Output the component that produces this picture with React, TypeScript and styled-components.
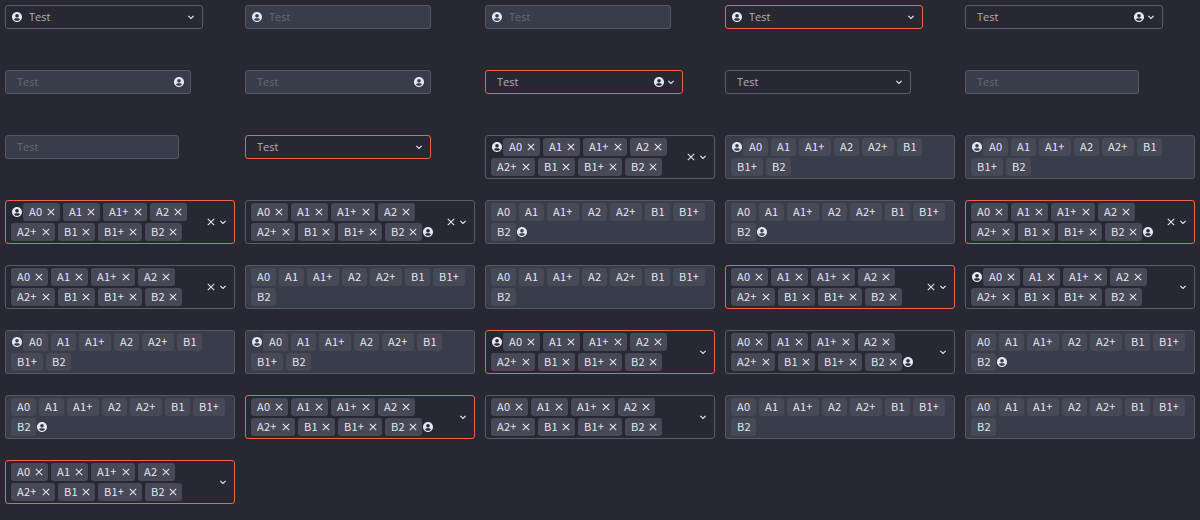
import React from "react";
import styled, { createGlobalStyle, css } from "styled-components";

const GlobalStyle = createGlobalStyle`
  * { box-sizing: border-box; }
  body {
    margin: 0;
    background: #282833;
    font-family: "Noto Sans CJK SC", sans-serif;
    font-size: 11px;
    overflow: hidden;
  }
`;

type State = "normal" | "disabled" | "error";
type Side = "left" | "right" | "none";

const Page = styled.main`
  display: grid;
  grid-template-columns: repeat(5, 240px);
  grid-auto-rows: 65px;
  height: 520px;
  width: 1200px;
`;

const Cell = styled.div`
  padding: 5px;
  display: flex;
  align-items: flex-start;
`;

const Field = styled.div<{ $state: State; $multi?: boolean }>`
  display: flex;
  align-items: center;
  border: 1px solid #5b5b69;
  border-radius: 3px;
  padding: 0 5px;
  height: 24px;
  color: #e6e6f0;
  ${(p) => p.$multi && css`width: 230px; height: 44px;`}
  ${(p) => p.$state === "disabled" && css`background: #393c4a; border-color: #555866;`}
  ${(p) => p.$state === "error" && css`border-color: #ec6547;`}
`;

const Input = styled.input`
  width: 162px;
  height: 22px;
  padding: 0 6px 1px;
  border: 0;
  outline: 0;
  background: transparent;
  font: 11px "Open Sans", sans-serif;
  &::placeholder { color: #b0b0c0; opacity: 1; }
  &:disabled::placeholder { color: #666876; }
`;

const Tags = styled.div`
  flex: 1;
  display: flex;
  flex-wrap: wrap;
  align-items: center;
  row-gap: 2px;
`;

const Tag = styled.span<{ $closable: boolean }>`
  display: flex;
  align-items: center;
  height: 18px;
  line-height: 16px;
  padding: 0 ${(p) => (p.$closable ? 3 : 6)}px 0 6px;
  margin-right: 3px;
  gap: 3px;
  border-radius: 3px;
  background: #474957;
  &:nth-last-child(1 of span) { margin-right: 0; }
`;

const Label = styled.b<{ $wide: boolean }>`
  width: ${(p) => (p.$wide ? 20 : 13)}px;
  height: 18px;
  font-weight: 400;
  letter-spacing: 0.25px;
  white-space: nowrap;
`;

const Icon = styled.svg`
  width: 12px;
  height: 12px;
  flex: none;
  fill: currentColor;
`;

const LineIcon = styled(Icon)`
  fill: none;
  stroke: currentColor;
`;

const Account = () => (
  <Icon viewBox="-49.6 -41.6 595.2 595.2">
    <path d="M248 8C111 8 0 119 0 256s111 248 248 248 248-111 248-248S385 8 248 8zm0 96c48.6 0 88 39.4 88 88s-39.4 88-88 88-88-39.4-88-88 39.4-88 88-88zm0 344c-58.7 0-111.3-26.6-146.5-68.2 18.8-35.4 55.6-59.8 98.5-59.8 2.4 0 4.8.4 7.1 1.1 13 4.2 26.6 6.9 40.9 6.9 14.3 0 28-2.7 40.9-6.9 2.3-.7 4.7-1.1 7.1-1.1 42.9 0 79.7 24.4 98.5 59.8C359.3 421.4 306.7 448 248 448z" />
  </Icon>
);

const Close = () => (
  <LineIcon viewBox="0 0 12 12" strokeWidth="1.05">
    <path d="M2.8 2.8 9.2 9.2M9.2 2.8 2.8 9.2" />
  </LineIcon>
);

const Arrow = () => (
  <LineIcon viewBox="0 0 12 12" strokeWidth="1.15">
    <path d="M3.3 4.9 6 7.4 8.7 4.9" />
  </LineIcon>
);

const LEVELS = ["A0", "A1", "A1+", "A2", "A2+", "B1", "B1+", "B2"];
const SIDES: Side[] = ["left", "right", "none"];
const STATES: State[] = ["normal", "disabled", "disabled", "error"];

const Single = ({ side, state }: { side: Side; state: State }) => (
  <Field $state={state}>
    {side === "left" && <Account />}
    <Input placeholder="Test" disabled={state === "disabled"} />
    {side === "right" && <Account />}
    {state !== "disabled" && <Arrow />}
  </Field>
);

const Multi = ({ side, state, clearable }: { side: Side; state: State; clearable: boolean }) => {
  const enabled = state !== "disabled";
  return (
    <Field $state={state} $multi>
      <Tags>
        {side === "left" && <Account />}
        {LEVELS.map((level) => (
          <Tag key={level} $closable={enabled}>
            <Label $wide={level.endsWith("+")}>{level}</Label>
            {enabled && <Close />}
          </Tag>
        ))}
        {side === "right" && <Account />}
      </Tags>
      {enabled && clearable && <Close />}
      {enabled && <Arrow />}
    </Field>
  );
};

const each = (render: (side: Side, state: State) => React.ReactNode, group: string) =>
  SIDES.flatMap((side) =>
    STATES.map((state, i) => <Cell key={`${group}-${side}-${i}`}>{render(side, state)}</Cell>)
  );

export default function App() {
  return (
    <>
      <GlobalStyle />
      <Page>
        {each((side, state) => <Single side={side} state={state} />, "single")}
        {each((side, state) => <Multi side={side} state={state} clearable />, "clearable")}
        {each((side, state) => <Multi side={side} state={state} clearable={false} />, "multi")}
      </Page>
    </>
  );
}
